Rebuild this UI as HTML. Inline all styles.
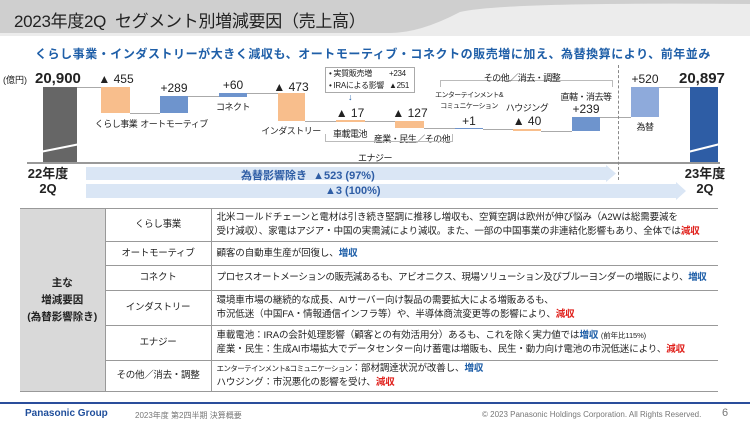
<!DOCTYPE html>
<html><head><meta charset="utf-8"><style>
*{margin:0;padding:0;box-sizing:border-box}
body{width:750px;height:425px;overflow:hidden;background:#fff;font-family:"Liberation Sans","Noto Sans CJK JP",sans-serif;position:relative;color:#222}
.a{position:absolute;white-space:nowrap}
.bar{position:absolute}
.or{background:#F8BE8C}.bl{background:#6E94CD}
.lbl{font-size:9px;letter-spacing:-0.5px;color:#222;transform:translateX(-50%)}
.num{font-size:12px;color:#222;transform:translateX(-50%)}
.hl{position:absolute;height:1px;background:#aaa}
table{position:absolute;left:20px;top:208px;width:698px;border-collapse:collapse;font-size:9.5px;table-layout:fixed}
td{border-top:1px solid #999;border-bottom:1px solid #999;padding:0 5px;line-height:14px;white-space:nowrap;overflow:hidden}
td.c2{text-align:center;border-left:1px solid #999;border-right:1px solid #999;letter-spacing:-0.3px}
td.c1{background:#d9d9d9;text-align:center;font-weight:bold;font-size:10.5px;line-height:17px}
td.c3{letter-spacing:-0.1px}
.up{color:#1F5FA8;font-weight:bold}.dn{color:#E0201B;font-weight:bold}
</style></head><body>
<svg class="a" style="left:0;top:0" width="750" height="36"><rect width="750" height="36" fill="#ececec"/><path d="M0 0H750V4Q500 2 460 12Q420 33 390 33H0Z" fill="#cfcfcf"/></svg>
<div class="a" style="left:14px;top:7px;font-size:17px;color:#222;letter-spacing:-0.3px">2023年度2Q&nbsp; セグメント別増減要因（売上高）</div>
<div class="a" style="left:35px;top:45px;font-size:12px;font-weight:bold;color:#1F5FA8;letter-spacing:0.55px">くらし事業・インダストリーが大きく減収も、オートモーティブ・コネクトの販売増に加え、為替換算により、前年並み</div>

<div class="a" style="left:3px;top:73px;font-size:9px">(億円)</div>
<div class="a" style="left:35px;top:70px;font-size:15px;font-weight:bold">20,900</div>
<div class="bar" style="left:43px;top:87px;width:34px;height:75px;background:#666"></div>
<svg class="a" style="left:38px;top:140px" width="44" height="16"><path d="M2 12L42 4" stroke="#fff" stroke-width="2"/></svg>
<div class="hl" style="left:77px;top:87px;width:24px"></div>
<div class="bar or" style="left:101px;top:87px;width:29px;height:26px"></div>
<div class="hl" style="left:130px;top:113px;width:30px"></div>
<div class="bar bl" style="left:160px;top:96px;width:28px;height:17px"></div>
<div class="hl" style="left:188px;top:96px;width:31px"></div>
<div class="bar bl" style="left:219px;top:93px;width:28px;height:4px"></div>
<div class="hl" style="left:247px;top:93px;width:31px"></div>
<div class="bar or" style="left:278px;top:93px;width:27px;height:28px"></div>
<div class="hl" style="left:305px;top:121px;width:31px"></div>
<div class="bar or" style="left:336px;top:120px;width:29px;height:2px"></div>
<div class="hl" style="left:365px;top:121px;width:30px"></div>
<div class="bar or" style="left:395px;top:121px;width:29px;height:7px"></div>
<div class="hl" style="left:424px;top:128px;width:31px"></div>
<div class="bar bl" style="left:455px;top:128px;width:28px;height:1px"></div>
<div class="hl" style="left:483px;top:129px;width:30px"></div>
<div class="bar or" style="left:513px;top:129px;width:28px;height:2px"></div>
<div class="hl" style="left:541px;top:131px;width:31px"></div>
<div class="bar bl" style="left:572px;top:117px;width:28px;height:14px"></div>
<div class="hl" style="left:600px;top:117px;width:31px"></div>
<div class="bar" style="left:631px;top:87px;width:28px;height:30px;background:#8EAADB"></div>
<div class="hl" style="left:659px;top:87px;width:31px"></div>
<div class="bar" style="left:690px;top:87px;width:28px;height:75px;background:#2E5DA5"></div>
<svg class="a" style="left:686px;top:140px" width="36" height="16"><path d="M2 12L34 4" stroke="#fff" stroke-width="2"/></svg>
<div class="a" style="left:27px;top:162px;width:693px;height:2px;background:#999"></div>
<div class="a" style="left:618px;top:65px;height:115px;border-left:1px dashed #888"></div>

<div class="a num" style="left:116px;top:72px">▲ 455</div>
<div class="a lbl" style="left:116px;top:117px">くらし事業</div>
<div class="a num" style="left:174px;top:81px">+289</div>
<div class="a lbl" style="left:174px;top:117px">オートモーティブ</div>
<div class="a num" style="left:233px;top:78px">+60</div>
<div class="a lbl" style="left:233px;top:100px">コネクト</div>
<div class="a num" style="left:291px;top:80px">▲ 473</div>
<div class="a lbl" style="left:291px;top:124px">インダストリー</div>
<div class="a" style="left:325px;top:67px;width:90px;height:26px;border:1px solid #aaa;font-size:8px;line-height:12px;padding-left:3px;letter-spacing:-0.3px">• 実質販売増<span style="position:absolute;left:63px">+234</span><br>• IRAによる影響<span style="position:absolute;left:63px">▲251</span></div>
<div class="a" style="left:348px;top:92px;font-size:9px;color:#1F5FA8">↓</div>
<div class="a num" style="left:350px;top:106px">▲ 17</div>
<div class="a lbl" style="left:350px;top:127px">車載電池</div>
<div class="a num" style="left:410px;top:106px">▲ 127</div>
<div class="a lbl" style="left:412px;top:132px">産業・民生／その他</div>
<div class="a" style="left:325px;top:134px;width:128px;height:8px;border:1px solid #bbb;border-top:none"></div>
<div class="a lbl" style="left:375px;top:151px">エナジー</div>
<div class="a" style="left:440px;top:80px;width:173px;height:7px;border:1px solid #bbb;border-bottom:none"></div>
<div class="a lbl" style="left:522px;top:71px">その他／消去・調整</div>
<div class="a" style="left:469px;top:90px;font-size:7px;letter-spacing:-0.6px;line-height:11px;text-align:center;transform:translateX(-50%)">エンターテインメント&amp;<br>コミュニケーション</div>
<div class="a num" style="left:469px;top:114px">+1</div>
<div class="a lbl" style="left:527px;top:101px">ハウジング</div>
<div class="a num" style="left:527px;top:114px">▲ 40</div>
<div class="a lbl" style="left:586px;top:90px">直轄・消去等</div>
<div class="a num" style="left:586px;top:102px">+239</div>
<div class="a num" style="left:645px;top:72px">+520</div>
<div class="a lbl" style="left:645px;top:120px">為替</div>
<div class="a" style="left:679px;top:70px;font-size:15px;font-weight:bold">20,897</div>

<div class="a" style="left:48px;top:166px;font-size:13px;font-weight:bold;text-align:center;line-height:15px;transform:translateX(-50%)">22年度<br>2Q</div>
<div class="a" style="left:705px;top:166px;font-size:13px;font-weight:bold;text-align:center;line-height:15px;transform:translateX(-50%)">23年度<br>2Q</div>
<svg class="a" style="left:86px;top:165px" width="610" height="36"><path d="M0 2H520V0L530 8.5L520 17V15H0Z" fill="#DAE6F5"/><path d="M0 19H590V17L600 26L590 35V33H0Z" fill="#DAE6F5"/></svg>
<div class="a" style="left:241px;top:167px;font-size:11px;font-weight:bold;color:#2E5DA5">為替影響除き&nbsp; ▲523 (97%)</div>
<div class="a" style="left:325px;top:185px;font-size:11px;font-weight:bold;color:#2E5DA5">▲3 (100%)</div>

<table>
<colgroup><col style="width:85px"><col style="width:106px"><col></colgroup>
<tr style="height:33px"><td class="c1" rowspan="6">主な<br>増減要因<br>(為替影響除き)</td><td class="c2">くらし事業</td><td class="c3">北米コールドチェーンと電材は引き続き堅調に推移し増収も、空質空調は欧州が伸び悩み（A2Wは総需要減を<br>受け減収）、家電はアジア・中国の実需減により減収。また、一部の中国事業の非連結化影響もあり、全体では<span class="dn">減収</span></td></tr>
<tr style="height:24px"><td class="c2">オートモーティブ</td><td class="c3">顧客の自動車生産が回復し、<span class="up">増収</span></td></tr>
<tr style="height:25px"><td class="c2">コネクト</td><td class="c3" style="letter-spacing:-0.4px">プロセスオートメーションの販売減あるも、アビオニクス、現場ソリューション及びブルーヨンダーの増販により、<span class="up">増収</span></td></tr>
<tr style="height:35px"><td class="c2">インダストリー</td><td class="c3">環境車市場の継続的な成長、AIサーバー向け製品の需要拡大による増販あるも、<br>市況低迷（中国FA・情報通信インフラ等）や、半導体商流変更等の影響により、<span class="dn">減収</span></td></tr>
<tr style="height:35px"><td class="c2">エナジー</td><td class="c3">車載電池：IRAの会計処理影響（顧客との有効活用分）あるも、これを除く実力値では<span class="up">増収</span> <span style="font-size:7.5px">(前年比115%)</span><br>産業・民生：生成AI市場拡大でデータセンター向け蓄電は増販も、民生・動力向け電池の市況低迷により、<span class="dn">減収</span></td></tr>
<tr style="height:31px"><td class="c2">その他／消去・調整</td><td class="c3"><span style="font-size:7.5px;letter-spacing:-0.6px">エンターテインメント&amp;コミュニケーション</span>：部材調達状況が改善し、<span class="up">増収</span><br>ハウジング：市況悪化の影響を受け、<span class="dn">減収</span></td></tr>
</table>

<div class="a" style="left:0;top:402px;width:750px;height:2px;background:#2A4D9B"></div>
<div class="a" style="left:25px;top:408px;font-size:10px;font-weight:bold;color:#1F4E9B">Panasonic Group</div>
<div class="a" style="left:135px;top:410px;font-size:8px;color:#777">2023年度 第2四半期 決算概要</div>
<div class="a" style="left:482px;top:410px;font-size:8px;color:#777">© 2023 Panasonic Holdings Corporation. All Rights Reserved.</div>
<div class="a" style="left:722px;top:407px;font-size:11px;color:#777">6</div>
</body></html>
